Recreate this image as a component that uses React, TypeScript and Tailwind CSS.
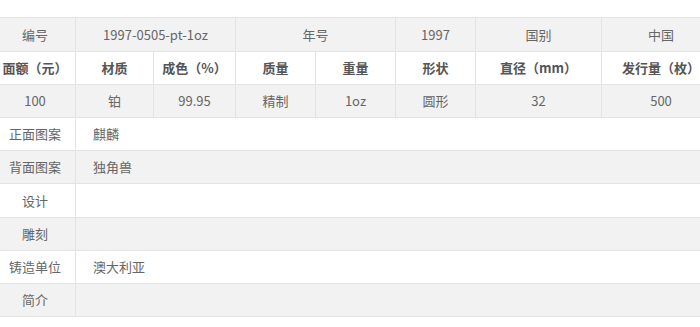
import React from "react";

const specs = [
  { label: "面额（元）", value: "100" },
  { label: "材质", value: "铂" },
  { label: "成色（%）", value: "99.95" },
  { label: "质量", value: "精制" },
  { label: "重量", value: "1oz" },
  { label: "形状", value: "圆形" },
  { label: "直径（mm）", value: "32" },
  { label: "发行量（枚）", value: "500" },
];

const details = [
  { label: "正面图案", value: "麒麟" },
  { label: "背面图案", value: "独角兽" },
  { label: "设计", value: "" },
  { label: "雕刻", value: "" },
  { label: "铸造单位", value: "澳大利亚" },
  { label: "简介", value: "" },
];

const cell = "border border-[#e3e3e3] h-[33px] p-0 text-center align-middle";

export default function App() {
  return (
    <div
      className="w-[700px] h-[327px] overflow-hidden bg-white pt-[17px] text-[13px] text-[#666]"
      style={{ fontFamily: '"Noto Sans CJK SC", "Noto Sans", sans-serif' }}
    >
      <table className="ml-[-6px] w-[726px] table-fixed border-collapse">
        <colgroup>
          <col className="w-[81px]" />
          <col className="w-[78px]" />
          <col className="w-[82px]" />
          <col className="w-[80px]" />
          <col className="w-[80px]" />
          <col className="w-[80px]" />
          <col className="w-[126px]" />
          <col className="w-[119px]" />
        </colgroup>
        <tbody>
          <tr className="bg-[#f2f2f2] h-[34px]">
            <td className={cell}>编号</td>
            <td className={cell} colSpan={2}>
              1997-0505-pt-1oz
            </td>
            <td className={cell} colSpan={2}>
              年号
            </td>
            <td className={cell}>1997</td>
            <td className={cell}>国别</td>
            <td className={cell}>中国</td>
          </tr>
          <tr className="bg-white">
            {specs.map((s) => (
              <td key={s.label} className={`${cell} font-bold text-[#555]`}>
                {s.label}
              </td>
            ))}
          </tr>
          <tr className="bg-[#f2f2f2]">
            {specs.map((s) => (
              <td key={s.label} className={cell}>
                {s.value}
              </td>
            ))}
          </tr>
          {details.map((d, i) => (
            <tr
              key={d.label}
              className={`${i % 2 === 0 ? "bg-white" : "bg-[#f2f2f2]"} ${i === 2 ? "h-[34px]" : ""}`}
            >
              <td className={cell}>{d.label}</td>
              <td className={`${cell} text-left pl-[17px]`} colSpan={7}>
                {d.value}
              </td>
            </tr>
          ))}
        </tbody>
      </table>
    </div>
  );
}
